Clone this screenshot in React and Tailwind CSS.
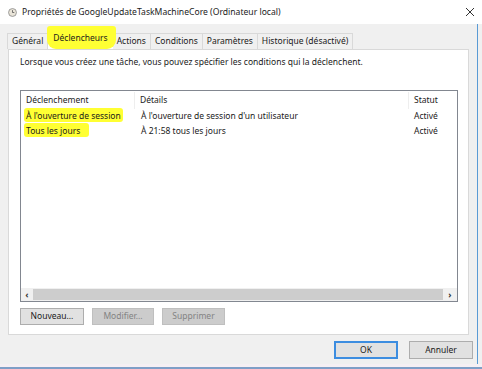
import React from "react";

const tabs = ["Général", "Déclencheurs", "Actions", "Conditions", "Paramètres", "Historique (désactivé)"];

const rows = [
  { name: "À l'ouverture de session", details: "À l'ouverture de session d'un utilisateur", status: "Activé", hl: "w-[99px]" },
  { name: "Tous les jours", details: "À 21:58 tous les jours", status: "Activé", hl: "w-[65px]" },
];

export default function App() {
  return (
    <div
      className="relative w-[482px] h-[369px] overflow-hidden bg-[#f0f0f0] text-[8.5px] text-[#1a1a1a] flex flex-col"
      style={{ fontFamily: '"Noto Sans", "Open Sans", sans-serif' }}
    >
      {/* title bar */}
      <div className="h-[24px] bg-white flex items-center pl-[8px] pr-[7px] shrink-0">
        <svg width="9" height="9" viewBox="0 0 10 10" className="mr-[5px]">
          <circle cx="5" cy="5" r="4.4" fill="#e9e4d8" stroke="#8a8a8a" strokeWidth="0.9" />
          <path d="M5 2.4V5h2" fill="none" stroke="#555" strokeWidth="0.9" />
        </svg>
        <span className="text-[8.6px] text-[#222]">Propriétés de GoogleUpdateTaskMachineCore (Ordinateur local)</span>
        <svg width="10" height="10" viewBox="0 0 10 10" className="ml-auto">
          <path d="M1 1l8 8M9 1l-8 8" stroke="#333" strokeWidth="1" />
        </svg>
      </div>

      <div className="flex-1 border-r border-r-[#5a9bd5] mr-[4px] flex flex-col">
        {/* tabs */}
        <div className="flex items-end pl-[8px] pt-[9px] h-[25px] relative shrink-0">
          {tabs.map((t, i) => (
            <div
              key={t}
              className={
                i === 1
                  ? "relative h-[18px] px-[5px] flex items-start pt-[1px] bg-white"
                  : "h-[16px] px-[4px] flex items-center border border-b-0 border-[#d9d9d9] -ml-px"
              }
            >
              {i === 1 && (
                <div className="absolute -left-[1px] -top-[5px] w-[69px] h-[23px] bg-[#ffff33] rounded-b-[9px] rounded-t-[3px]" />
              )}
              <span className="relative">{t}</span>
            </div>
          ))}
        </div>

        {/* panel */}
        <div className="mx-[8px] h-[286px] bg-white border border-[#d9d9d9] pl-[11px] pr-[10px] flex flex-col shrink-0">
          <div className="pt-[6px] h-[40px]">Lorsque vous créez une tâche, vous pouvez spécifier les conditions qui la déclenchent.</div>
          <div className="h-[212px] border border-[#828790] flex flex-col">
            <div className="flex h-[18px] items-center pt-[1px]">
              <div className="w-[114px] pl-[5px] border-r border-[#eeeeee] h-full flex items-center">Déclenchement</div>
              <div className="w-[273px] pl-[5px] h-full flex items-center">Détails</div>
              <div className="flex-1 pl-[5px] border-l border-[#eeeeee] h-full flex items-center">Statut</div>
            </div>
            {rows.map((r) => (
              <div key={r.name} className="flex h-[15px] items-center">
                <div className="w-[114px] pl-[5px] relative">
                  <div className={`absolute left-[3px] -top-[2px] h-[14px] bg-[#ffff33] rounded-[3px] ${r.hl}`} />
                  <span className="relative">{r.name}</span>
                </div>
                <div className="w-[273px] pl-[6px]">{r.details}</div>
                <div className="flex-1 pl-[6px]">{r.status}</div>
              </div>
            ))}
            <div className="flex-1" />
            <div className="h-[13px] flex items-center bg-[#f0f0f0]">
              <div className="w-[12px] h-full flex items-center justify-center text-[9px] font-bold text-[#333]">‹</div>
              <div className="flex-1 h-[11px] bg-[#cdcdcd]" />
              <div className="w-[14px] h-full flex items-center justify-center text-[9px] font-bold text-[#333]">›</div>
            </div>
          </div>
          <div className="flex gap-[8px] pt-[6px]">
            <div className="w-[64px] h-[17px] border border-[#adadad] bg-[#e1e1e1] flex items-center justify-center">Nouveau...</div>
            <div className="w-[62px] h-[17px] border border-[#bfbfbf] bg-[#cccccc] text-[#838383] flex items-center justify-center">Modifier...</div>
            <div className="w-[63px] h-[17px] border border-[#bfbfbf] bg-[#cccccc] text-[#838383] flex items-center justify-center">Supprimer</div>
          </div>
        </div>

        {/* dialog buttons */}
        <div className="flex justify-end gap-[11px] pr-[4px] pt-[6px]">
          <div className="w-[64px] h-[18px] border-2 border-[#3c8de0] bg-[#e1e1e1] flex items-center justify-center">OK</div>
          <div className="w-[64px] h-[18px] border border-[#adadad] bg-[#e1e1e1] flex items-center justify-center">Annuler</div>
        </div>
        <div className="flex-1" />
      </div>
      <div className="h-[3px] bg-[#f6f0f4] shrink-0" />
      <div className="h-[2px] bg-[#7f9fc7] shrink-0" />
    </div>
  );
}
